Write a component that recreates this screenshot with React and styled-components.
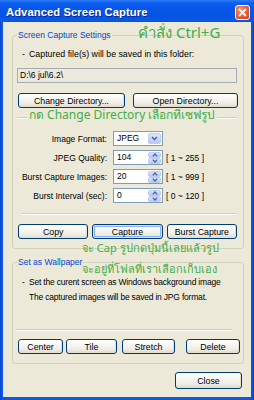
import React from "react";
import styled, { createGlobalStyle } from "styled-components";

const GlobalStyle = createGlobalStyle`
  html, body { margin: 0; padding: 0; width: 254px; height: 400px; overflow: hidden; background: #ffffff; }
  #root { width: 254px; height: 400px; }
  * { box-sizing: border-box; }
`;

const UI_FONT = `"Liberation Sans", Arial, sans-serif`;
const HAND_FONT = `"Noto Sans", "DejaVu Sans", sans-serif`;
const FS = "8.5px";

const Window = styled.div`
  width: 254px;
  height: 400px;
  display: flex;
  flex-direction: column;
  padding: 0 3px 3px 3px;
  background: linear-gradient(to right, #0842c8 0px, #0a5ae8 2px, #0a5ae8 251px, #0842c8 254px);
  font-family: ${UI_FONT};
`;

const TitleBar = styled.div`
  height: 22px;
  margin: 0 -3px;
  padding: 0 4px 0 6px;
  display: flex;
  align-items: center;
  justify-content: space-between;
  background: linear-gradient(
    to bottom,
    #2f7cf6 0px,
    #0c5ff0 3px,
    #0656e8 10px,
    #0553e2 17px,
    #0a5ae6 20px,
    #0a4fd8 22px
  );
`;

const Title = styled.span`
  color: #ffffff;
  font-weight: bold;
  font-size: 11.2px;
  letter-spacing: 0.1px;
  text-shadow: 1px 1px 0 #0b2a8a;
  margin-top: 1px;
`;

const CloseButton = styled.div`
  width: 15px;
  height: 15px;
  border: 1px solid #ffffff;
  border-radius: 3px;
  background: radial-gradient(circle at 35% 30%, #f39a7c 0%, #e3643e 45%, #c8401c 100%);
  display: flex;
  align-items: center;
  justify-content: center;
  margin-top: 2px;
`;

const Body = styled.div`
  position: relative;
  flex: 1;
  background: #ece9d8;
  padding: 0 7px 0 9px;
  display: flex;
  flex-direction: column;
`;

const Group = styled.fieldset`
  margin: ${(p) => p.$top}px 0 0 0;
  padding: 0 6px 9px 4px;
  border: 1px solid #d0d0bf;
  border-radius: 3px;
  min-width: 0;
  display: flex;
  flex-direction: column;
`;

const Legend = styled.legend`
  color: #0046d5;
  font-size: ${FS};
  line-height: 12px;
  padding: 0 1px;
  margin-left: 0;
`;

const InfoLine = styled.div`
  display: flex;
  font-size: ${(p) => (p.$compact ? "8.5px" : "8.8px")};
  letter-spacing: ${(p) => (p.$compact ? "-0.2px" : "0")};
  line-height: 12px;
  color: #000000;
  white-space: nowrap;
  margin-top: ${(p) => p.$top}px;
`;

const Dash = styled.span`
  width: 12px;
  padding-left: 5px;
  flex: none;
`;

const PathBox = styled.div`
  margin-top: 8px;
  height: 15px;
  border: 1px solid #a5acb5;
  background: #ebe9dc;
  font-size: ${FS};
  line-height: 13px;
  padding-left: 2px;
  color: #000;
`;

const ButtonRow = styled.div`
  display: flex;
  gap: ${(p) => p.$gap || 4}px;
  padding: 0 0 0 1px;
  margin-top: ${(p) => p.$top}px;
`;

const Button = styled.div`
  height: ${(p) => p.$h || 15}px;
  ${(p) => (p.$w ? `width: ${p.$w}px; flex: none;` : `flex: 1;`)}
  margin-left: ${(p) => p.$ml || 0}px;
  border: 1px solid #003c74;
  border-radius: 3px;
  background: linear-gradient(to bottom, #ffffff 0%, #f5f4ef 45%, #ebe9e0 80%, #d8d3c4 100%);
  box-shadow: ${(p) =>
    p.$default
      ? "inset 0 0 0 1px #cee7ff, inset 0 0 0 2px #8ab0ee"
      : "inset -1px -1px 0 #e3dfd2"};
  display: flex;
  align-items: center;
  justify-content: center;
  font-size: 8.8px;
  color: #000000;
  white-space: nowrap;
`;

const Separator = styled.div`
  margin: ${(p) => p.$top}px ${(p) => p.$right || 0}px 0 ${(p) => p.$left || 0}px;
  height: 2px;
  border-top: 1px solid #d0cdbd;
  border-bottom: 1px solid #ffffff;
`;

const FormGrid = styled.div`
  margin-top: 12px;
  display: grid;
  grid-template-columns: 90px 50px auto;
  column-gap: 6px;
  row-gap: 4px;
  align-items: center;
`;

const FieldLabel = styled.div`
  text-align: right;
  font-size: ${FS};
  color: #000000;
  white-space: nowrap;
`;

const Field = styled.div`
  height: 15px;
  border: 1px solid #7f9db9;
  background: #ffffff;
  display: flex;
  align-items: stretch;
  font-size: ${FS};
`;

const FieldValue = styled.div`
  flex: 1;
  padding-left: 3px;
  line-height: 13px;
  color: #000;
`;

const SideButtons = styled.div`
  width: 13px;
  margin: 1px;
  display: flex;
  flex-direction: column;
`;

const SideButton = styled.div`
  flex: 1;
  border-radius: 2px;
  background: linear-gradient(to bottom, #dbe6fd 0%, #c3d4fb 60%, #b4c8f6 100%);
  border: 1px solid #bccdf3;
  display: flex;
  align-items: center;
  justify-content: center;
`;

const Range = styled.div`
  font-size: ${FS};
  color: #000;
  margin-left: -3px;
  white-space: nowrap;
`;

const Note = styled.div`
  position: absolute;
  left: ${(p) => p.$x}px;
  top: ${(p) => p.$y}px;
  font-family: ${HAND_FONT};
  font-size: ${(p) => p.$size}px;
  line-height: 1;
  color: #43ad47;
  white-space: nowrap;
  pointer-events: none;
`;

const NoteBg = styled(Note)`
  background: #ece9d8;
  padding: 0 2px;
`;

const Footer = styled.div`
  display: flex;
  justify-content: flex-end;
  margin-top: 8px;
  padding-right: 2px;
`;

const Chevron = () => (
  <svg width="7" height="5" viewBox="0 0 7 5">
    <path d="M1 1 L3.5 3.5 L6 1" fill="none" stroke="#4d6185" strokeWidth="1.4" />
  </svg>
);

const SpinField = ({ value }) => (
  <Field>
    <FieldValue>{value}</FieldValue>
    <SideButtons>
      <SideButton>
        <svg width="6" height="4" viewBox="0 0 6 4">
          <path d="M0.8 3.4 L3 1 L5.2 3.4" fill="none" stroke="#4d6185" strokeWidth="1.2" />
        </svg>
      </SideButton>
      <SideButton>
        <svg width="6" height="4" viewBox="0 0 6 4">
          <path d="M0.8 0.6 L3 3 L5.2 0.6" fill="none" stroke="#4d6185" strokeWidth="1.2" />
        </svg>
      </SideButton>
    </SideButtons>
  </Field>
);

const SelectField = ({ value }) => (
  <Field>
    <FieldValue>{value}</FieldValue>
    <SideButtons>
      <SideButton>
        <Chevron />
      </SideButton>
    </SideButtons>
  </Field>
);

export default function App() {
  return (
    <>
      <GlobalStyle />
      <Window>
        <TitleBar>
          <Title>Advanced Screen Capture</Title>
          <CloseButton>
            <svg width="9" height="9" viewBox="0 0 9 9">
              <path d="M1.5 1.5 L7.5 7.5 M7.5 1.5 L1.5 7.5" stroke="#ffffff" strokeWidth="1.8" strokeLinecap="round" />
            </svg>
          </CloseButton>
        </TitleBar>
        <Body>
          <Group $top={7}>
            <Legend>Screen Capture Settings</Legend>
            <InfoLine $top={7}>
              <Dash>-</Dash>
              <span>Captured file(s) will be saved in this folder:</span>
            </InfoLine>
            <PathBox>D:\6 jul\6.2\</PathBox>
            <ButtonRow $top={10} $gap={8}>
              <Button $w={107}>Change Directory...</Button>
              <Button $w={105}>Open Directory...</Button>
            </ButtonRow>
            <Separator $top={9} />
            <FormGrid>
              <FieldLabel>Image Format:</FieldLabel>
              <SelectField value="JPEG" />
              <span />
              <FieldLabel>JPEG Quality:</FieldLabel>
              <SpinField value="104" />
              <Range>[ 1 ~ 255 ]</Range>
              <FieldLabel>Burst Capture Images:</FieldLabel>
              <SpinField value="20" />
              <Range>[ 1 ~ 999 ]</Range>
              <FieldLabel>Burst Interval (sec):</FieldLabel>
              <SpinField value="0" />
              <Range>[ 0 ~ 120 ]</Range>
            </FormGrid>
            <Separator $top={10} $left={5} $right={1} />
            <ButtonRow $top={9}>
              <Button>Copy</Button>
              <Button $default>Capture</Button>
              <Button>Burst Capture</Button>
            </ButtonRow>
          </Group>
          <Group $top={7}>
            <Legend>Set as Wallpaper</Legend>
            <InfoLine $top={8} $compact>
              <Dash>-</Dash>
              <span>Set the curent screen as Windows background image</span>
            </InfoLine>
            <InfoLine $top={3} $compact>
              <Dash />
              <span>The captured images will be saved in JPG format.</span>
            </InfoLine>
            <Separator $top={26} $left={-2} $right={5} />
            <ButtonRow $top={8} $gap={3}>
              <Button $w={45}>Center</Button>
              <Button $w={51}>Tile</Button>
              <Button $w={53} $ml={2}>Stretch</Button>
              <Button $w={54} $ml={8}>Delete</Button>
            </ButtonRow>
          </Group>
          <Footer>
            <Button $w={67} $h={17}>Close</Button>
          </Footer>

          <Note $x={135} $y={3} $size={15}>คำสั่ง Ctrl+G</Note>
          <NoteBg $x={24} $y={87} $size={12}>กด Change Directory เลือกที่เซฟรูป</NoteBg>
          <Note $x={79} $y={220} $size={11}>จะ Cap รูปกดปุ่มนี้เลยแล้วรูป</Note>
          <Note $x={79} $y={241} $size={11}>จะอยู่ที่โฟลที่เราเลือกเก็บเอง</Note>
        </Body>
      </Window>
    </>
  );
}
